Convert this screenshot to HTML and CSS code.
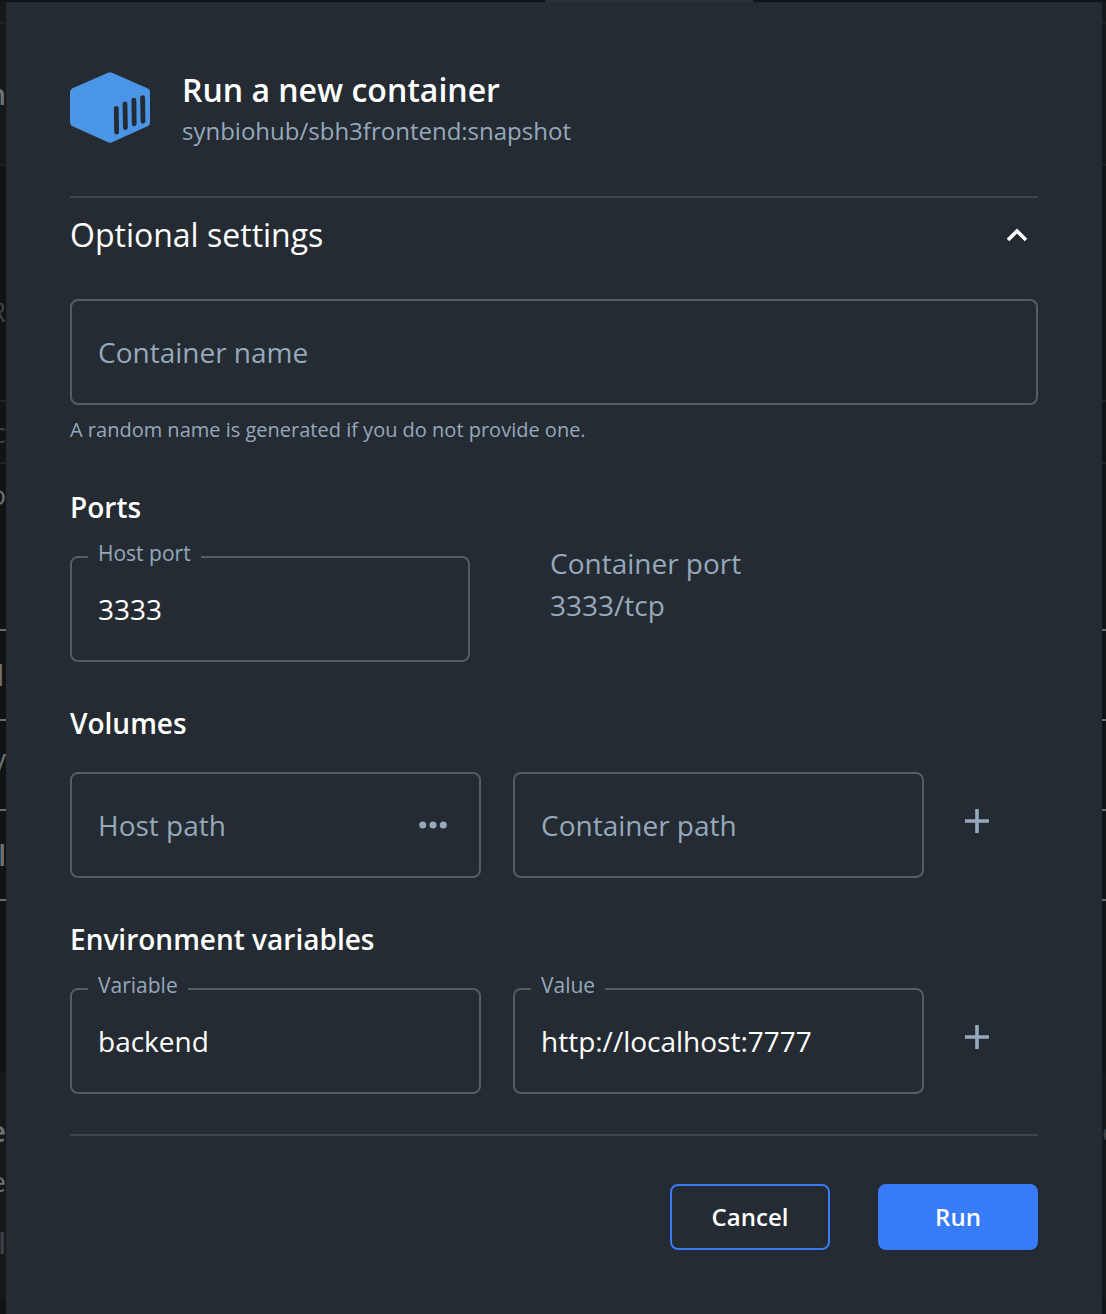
FILE: index.html
```html
<!DOCTYPE html>
<html lang="en">
<head>
<meta charset="utf-8">
<title>Run a new container</title>
<meta name="viewport" content="width=device-width, initial-scale=1">
<link rel="stylesheet" href="styles.css">
</head>
<body>
<div class="screen">
  <div class="backdrop" aria-hidden="true">
    <div class="tab"></div>
    <div class="row row-top"></div>
    <div class="row row-title"><span class="peek bold">n</span></div>
    <div class="row row-head"><span class="peek dim">R</span></div>
    <div class="row row-filter"><span class="peek dim">c</span></div>
    <div class="row row-first strong"><span class="peek">o</span></div>
    <div class="row strong"><span class="peek bold cut">l</span></div>
    <div class="row row-raised strong"><span class="peek">y</span></div>
    <div class="row strong"><span class="peek bold">l</span></div>
    <div class="row row-space"></div>
    <div class="row row-foot">
      <div class="line"><span class="peek bold">e</span><span class="peek dim peek-right">e</span></div>
      <span class="peek">e</span>
      <span class="peek dim bold low">l</span>
    </div>
  </div>

  <form class="dialog" role="dialog" aria-labelledby="title">
    <header class="header">
      <svg class="logo" viewBox="0 0 80 71" aria-hidden="true">
        <path fill="#4a95e6" d="M38 .8Q40-.3 42 .8L77.500 16.300Q80 17.500 80 20V50.500Q80 53 77.500 54.200L42 70.200Q40 71.200 38 70.200L2.500 54.200Q0 53 0 50.500V20Q0 17.500 2.500 16.300Z"/>
        <path fill="none" stroke="#242b32" stroke-width="4.800" stroke-linecap="round" d="M46.300 36.400L46.600 60.200M55 32L55.400 55.600M63.900 28.200L64.200 51.800M72.600 25.600L73 49.300"/>
      </svg>
      <div>
        <h1 class="title" id="title">Run a new container</h1>
        <p class="subtitle">synbiohub/sbh3frontend:snapshot</p>
      </div>
    </header>

    <button class="summary" type="button" aria-expanded="true">
      <span>Optional settings</span>
      <svg class="chevron" viewBox="0 0 22 14" aria-hidden="true"><path d="M2 12L11 3L20 12" fill="none" stroke="#fff" stroke-width="3.600"/></svg>
    </button>

    <div class="name-group">
      <div class="field">
        <input class="input" type="text" placeholder="Container name" aria-label="Container name" aria-describedby="name-help">
      </div>
      <p class="help" id="name-help">A random name is generated if you do not provide one.</p>
    </div>

    <section class="section">
      <h2 class="heading">Ports</h2>
      <div class="ports">
        <div class="field">
          <label class="label" for="host-port">Host port</label>
          <input class="input" id="host-port" type="text" value="3333">
        </div>
        <p class="port-info">Container port<br>3333/tcp</p>
      </div>
    </section>

    <section class="section">
      <h2 class="heading">Volumes</h2>
      <div class="pair">
        <div class="field">
          <input class="input" type="text" placeholder="Host path" aria-label="Host path">
          <button class="browse" type="button" aria-label="Browse">
            <svg class="dots" viewBox="0 0 28 8" aria-hidden="true"><g fill="#96a8bc"><circle cx="3.700" cy="4" r="3.500"/><circle cx="14" cy="4" r="3.500"/><circle cx="24.300" cy="4" r="3.500"/></g></svg>
          </button>
        </div>
        <div class="field">
          <input class="input" type="text" placeholder="Container path" aria-label="Container path">
        </div>
        <button class="add" type="button" aria-label="Add volume">
          <svg class="plus" viewBox="0 0 26 26" aria-hidden="true"><path d="M13 1V25M1 13H25" stroke="#96a8bc" stroke-width="3.600"/></svg>
        </button>
      </div>
    </section>

    <section class="section">
      <h2 class="heading">Environment variables</h2>
      <div class="pair">
        <div class="field">
          <label class="label" for="variable">Variable</label>
          <input class="input" id="variable" type="text" value="backend">
        </div>
        <div class="field">
          <label class="label" for="value">Value</label>
          <input class="input" id="value" type="text" value="http://localhost:7777">
        </div>
        <button class="add" type="button" aria-label="Add environment variable">
          <svg class="plus" viewBox="0 0 26 26" aria-hidden="true"><path d="M13 1V25M1 13H25" stroke="#96a8bc" stroke-width="3.600"/></svg>
        </button>
      </div>
    </section>

    <footer class="actions">
      <button class="button" type="button">Cancel</button>
      <button class="button primary" type="submit">Run</button>
    </footer>
  </form>
</div>
</body>
</html>
```
FILE: styles.css
```css
* {
  box-sizing: border-box;
}

body {
  margin: 0;
  background: #0f1416;
  color: #fff;
  font-family: "Open Sans", "Noto Sans", sans-serif;
}

h1, h2, p {
  margin: 0;
}

button, input {
  font: inherit;
  color: inherit;
}

button {
  padding: 0;
  border: 0;
  background: none;
  cursor: pointer;
}

svg {
  display: block;
}

/* The dimmed page and the dialog share one grid cell. */
.screen {
  display: grid;
  grid-template-columns: minmax(0, 1fr);
  min-height: 100vh;
  overflow: hidden;
}

.backdrop, .dialog {
  grid-area: 1 / 1;
}

.backdrop {
  display: flex;
  flex-direction: column;
}

.tab {
  flex: none;
  width: 208px;
  height: 2px;
  margin-left: 49.3%;
  background: #2b3032;
}

.row {
  display: flex;
  flex-direction: column;
  justify-content: center;
  height: 90px;
  border-bottom: 2px solid #1c2123;
}

.row-top { height: 22px; background: #14191b; }
.row-title { height: 142px; background: #14191b; }
.row-head { height: 236px; padding-top: 56px; }
.row-filter { height: 62px; }
.row-first { height: 167px; justify-content: flex-start; padding-top: 10px; }
.row-raised { padding-bottom: 14px; }
.row-space { height: 172px; border: 0; }
.row-foot { height: 226px; border: 0; background: #14191b; justify-content: flex-start; padding-top: 38px; gap: 10px; }
.strong { border-color: #6b6b6b; }

.line {
  display: flex;
  justify-content: space-between;
}

.peek {
  display: flex;
  justify-content: flex-end;
  width: 6px;
  overflow: hidden;
  color: #6f7173;
  font-size: 28px;
  line-height: 40px;
}

.peek-right {
  justify-content: flex-start;
  width: 4px;
}

.bold { font-weight: 600; }
.dim { color: #3b4146; }
.cut { width: 4px; }
.low { margin-top: 12px; }

.dialog {
  margin: 2px 4px 0 6px;
  padding: 64px;
  background: #242b32;
}

.header {
  display: flex;
  align-items: center;
  gap: 32px;
  padding-bottom: 48px;
  border-bottom: 2px solid #3e464e;
}

.logo {
  width: 80px;
  height: 71px;
}

.title {
  font-size: 32px;
  font-weight: 600;
  line-height: 48px;
}

.subtitle {
  color: #96a8bc;
  font-size: 24px;
  line-height: 34px;
}

.summary {
  display: flex;
  align-items: center;
  justify-content: space-between;
  width: 100%;
  padding: 13px 10px 14px 0;
  font-size: 32px;
  line-height: 48px;
  text-align: left;
}

.chevron {
  width: 22px;
  height: 14px;
}

.name-group {
  padding-top: 26px;
}

.field {
  position: relative;
  display: flex;
  align-items: center;
  border: 2px solid #575c61;
  border-radius: 8px;
}

.input {
  flex: 1;
  min-width: 0;
  height: 102px;
  padding: 0 26px;
  border: 0;
  outline: 0;
  background: none;
  font-size: 28px;
}

.input::placeholder {
  color: #96a8bc;
  opacity: 1;
}

.label {
  position: absolute;
  top: -21px;
  left: 16px;
  padding: 0 10px;
  background: #242b32;
  color: #96a8bc;
  font-size: 21px;
  line-height: 32px;
}

.help {
  padding-top: 9px;
  color: #96a8bc;
  font-size: 20px;
  line-height: 32px;
}

.section {
  padding-top: 42px;
}

.heading {
  padding-bottom: 30px;
  font-size: 28px;
  font-weight: 600;
  line-height: 38px;
}

.ports {
  display: grid;
  grid-template-columns: 400px 1fr;
  gap: 80px;
}

.port-info {
  margin-top: -14px;
  color: #96a8bc;
  font-size: 28px;
  line-height: 42px;
}

.pair {
  display: grid;
  grid-template-columns: minmax(0, 1fr) minmax(0, 1fr) 82px;
  gap: 32px;
}

.browse {
  padding: 20px 32px 20px 0;
}

.dots {
  width: 28px;
  height: 8px;
}

.add {
  display: grid;
  place-items: center;
  width: 42px;
  height: 98px;
}

.plus {
  width: 26px;
  height: 26px;
}

.actions {
  display: flex;
  justify-content: flex-end;
  gap: 48px;
  margin-top: 40px;
  padding-top: 48px;
  border-top: 2px solid #3e464e;
}

.button {
  width: 160px;
  height: 66px;
  padding-bottom: 2px;
  border: 2px solid #377bf9;
  border-radius: 8px;
  font-size: 24px;
  font-weight: 600;
}

.primary {
  background: #377bf9;
}
```
